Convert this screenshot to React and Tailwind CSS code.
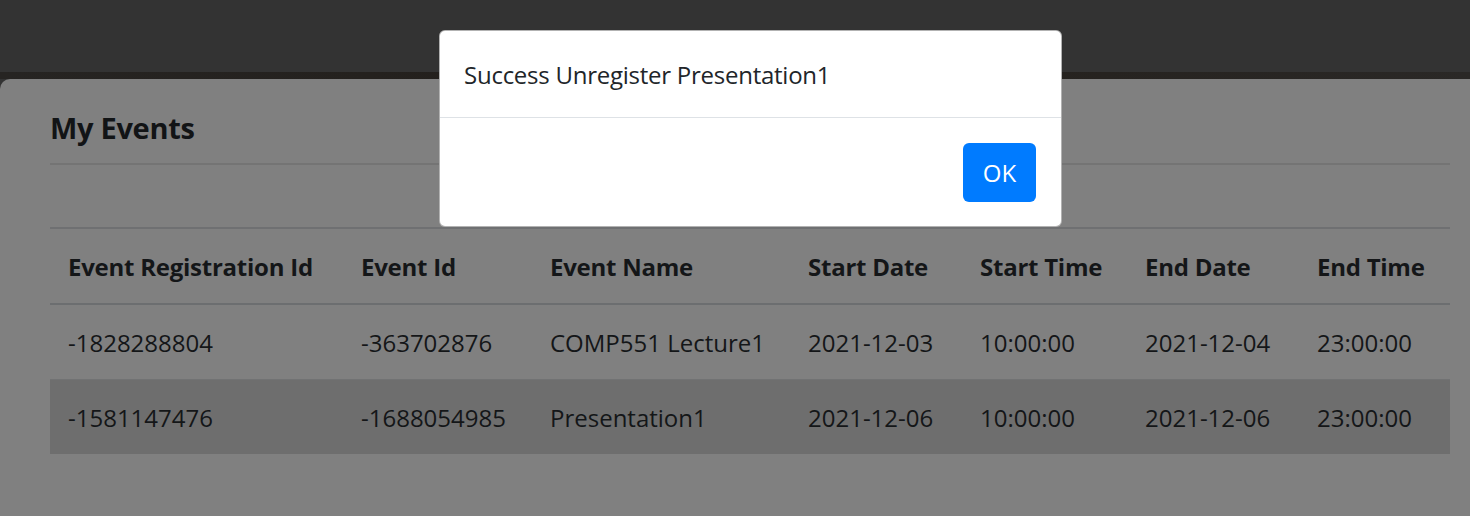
import React from "react";

const cols = [
  { label: "Event Registration Id", w: "w-[293px]" },
  { label: "Event Id", w: "w-[189px]" },
  { label: "Event Name", w: "w-[258px]" },
  { label: "Start Date", w: "w-[172px]" },
  { label: "Start Time", w: "w-[165px]" },
  { label: "End Date", w: "w-[172px]" },
  { label: "End Time", w: "w-[151px]" },
];

const rows = [
  ["-1828288804", "-363702876", "COMP551 Lecture1", "2021-12-03", "10:00:00", "2021-12-04", "23:00:00"],
  ["-1581147476", "-1688054985", "Presentation1", "2021-12-06", "10:00:00", "2021-12-06", "23:00:00"],
];

export default function App() {
  return (
    <div
      className="relative w-[1470px] h-[516px] overflow-hidden flex flex-col bg-[#333333]"
      style={{ fontFamily: '"Open Sans", "Noto Sans", sans-serif' }}
    >
      <div className="h-[72px] shrink-0 bg-[#333333]" />
      <div className="h-[7px] shrink-0 bg-gradient-to-r from-[#262422] via-[#221e1a] to-[#2a2826]" />
      <div className="flex-1 bg-[#808080] rounded-tl-[10px] pl-[50px] pr-[20px] pt-[31px]">
        <h1 className="text-[29px] leading-[36px] font-bold tracking-[-0.3px] text-[#121416]">My Events</h1>
        <div className="mt-[17px] h-[2px] bg-[#747474]" />
        <table className="mt-[62px] w-[1400px] table-fixed border-collapse text-[24px] leading-[36px] text-[#141618]">
          <thead>
            <tr className="border-t-2 border-[#6f7072]">
              {cols.map((c) => (
                <th
                  key={c.label}
                  className={`${c.w} text-left font-bold tracking-[-0.25px] pl-[18px] pr-0 pt-[20px] pb-[18px] whitespace-nowrap border-b-2 border-[#6c6e70]`}
                >
                  {c.label}
                </th>
              ))}
            </tr>
          </thead>
          <tbody>
            {rows.map((r, i) => (
              <tr
                key={i}
                className={i === 1 ? "bg-[#6e6e6e] border-t border-[#717273]" : "border-t border-[#777879]"}
              >
                {r.map((v, j) => (
                  <td key={j} className="pl-[18px] pr-0 pt-[20px] pb-[18px] whitespace-nowrap">
                    {v}
                  </td>
                ))}
              </tr>
            ))}
          </tbody>
        </table>
      </div>

      <div className="absolute left-[439px] top-[30px] w-[623px] h-[197px] bg-white rounded-[6px] border border-black/30 flex flex-col">
        <div className="h-[86px] pl-[24px] pt-[26px] text-[24px] leading-[36px] tracking-[-0.25px] text-[#212529]">
          Success Unregister Presentation1
        </div>
        <div className="flex-1 border-t border-[#dee2e6] flex items-start justify-end pt-[25px] pr-[25px]">
          <button className="w-[73px] h-[59px] rounded-[6px] bg-[#007bff] text-white text-[24px] leading-none flex items-center justify-center">
            OK
          </button>
        </div>
      </div>
    </div>
  );
}
